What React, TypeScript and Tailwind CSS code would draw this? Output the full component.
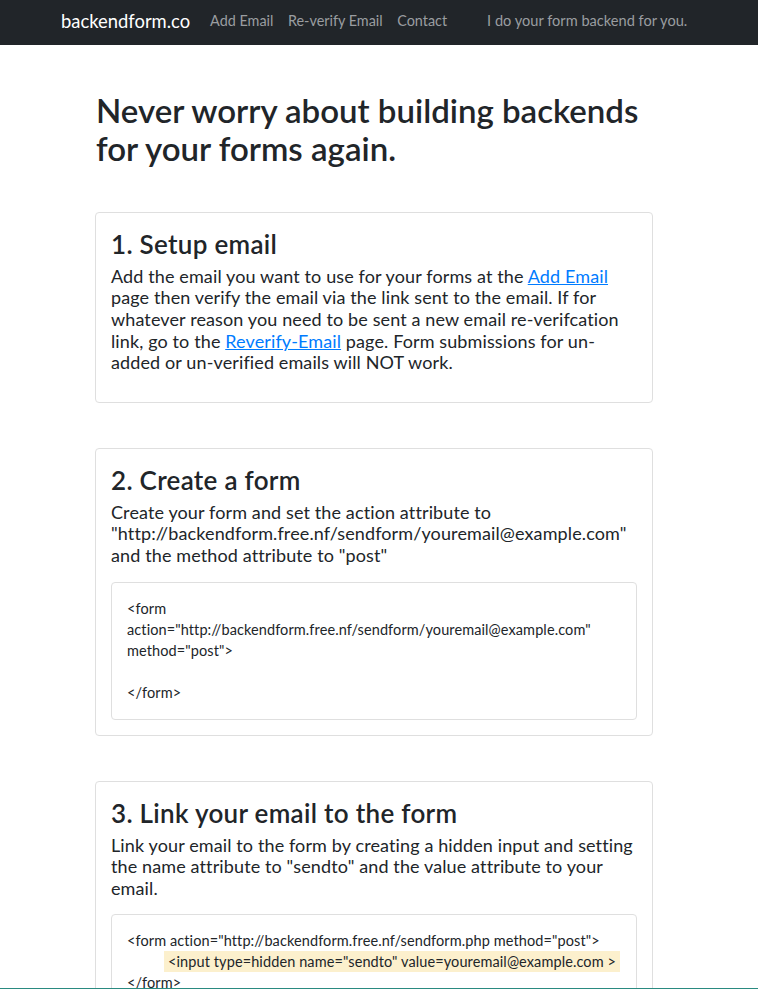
const font = { fontFamily: 'Lato, "Open Sans", sans-serif' };

function Navbar() {
  return (
    <nav className="flex h-[45px] items-center bg-[#212529] pb-[4px] pl-[61px]">
      <a className="text-[18.4px] leading-[30px] text-white">backendform.co</a>
      <div className="ml-[20px] flex items-center gap-[14.5px] text-[14.4px] text-[#9a9da0]">
        <a>Add Email</a>
        <a>Re-verify Email</a>
        <a>Contact</a>
      </div>
      <span className="ml-[40px] text-[14.6px] text-[#9a9da0]">I do your form backend for you.</span>
    </nav>
  );
}

function Step({ title, children }: { title: string; children: React.ReactNode }) {
  return (
    <div className="rounded-[4px] border border-[#dfdfdf] px-[15px] pt-[14px] pb-[15px]">
      <h3 className="mb-[5px] text-[26px] leading-[34px] font-semibold tracking-[0.3px]">{title}</h3>
      {children}
    </div>
  );
}

function CodeBox({ children }: { children: React.ReactNode }) {
  return (
    <div className="rounded-[4px] border border-[#dfdfdf] px-[15px] pt-[15px] pb-[16px] text-[14.5px] leading-[21px] tracking-[0.1px]">
      {children}
    </div>
  );
}

export default function App() {
  return (
    <div className="min-h-screen bg-white text-[#212529]" style={font}>
      <Navbar />
      <main className="ml-[95px] w-[558px] pt-[46px] pb-[60px]">
        <h2 className="mb-[44px] pl-[1px] text-[33px] leading-[38.4px] font-semibold">
          Never worry about building backends for your forms again.
        </h2>
        <div className="flex flex-col gap-[45px]">
          <Step title="1. Setup email">
            <p className="mb-[13px] text-[18px] leading-[21.6px] tracking-[0.12px]">
              Add the email you want to use for your forms at the{' '}
              <a className="text-[#007bff] underline">Add Email</a> page then verify the email via the
              link sent to the email. If for whatever reason you need to be sent a new email
              re-verifcation link, go to the{' '}
              <a className="text-[#007bff] underline">Reverify-Email</a> page. Form submissions for
              un-added or un-verified emails will NOT work.
            </p>
          </Step>

          <Step title="2. Create a form">
            <p className="mb-[15px] text-[18px] leading-[21.6px] tracking-[0.12px]">
              Create your form and set the action attribute to
              "http://backendform.free.nf/sendform/youremail@example.com" and the method attribute to
              "post"
            </p>
            <CodeBox>
              <div>&lt;form</div>
              <div>action="http://backendform.free.nf/sendform/youremail@example.com"</div>
              <div>method="post"&gt;</div>
              <div>&nbsp;</div>
              <div>&lt;/form&gt;</div>
            </CodeBox>
          </Step>

          <Step title="3. Link your email to the form">
            <p className="mb-[15px] text-[18px] leading-[21.6px] tracking-[0.12px]">
              Link your email to the form by creating a hidden input and setting the name attribute to
              "sendto" and the value attribute to your email.
            </p>
            <CodeBox>
              <div>&lt;form action="http://backendform.free.nf/sendform.php method="post"&gt;</div>
              <div className="pl-[37px]">
                <span className="bg-[#fcf0cd] px-[4px] py-[2px]">
                  &lt;input type=hidden name="sendto" value=youremail@example.com &gt;
                </span>
              </div>
              <div>&lt;/form&gt;</div>
            </CodeBox>
          </Step>
        </div>
      </main>
      <div className="fixed bottom-0 left-0 h-px w-full bg-[#2a8a80]" />
    </div>
  );
}
